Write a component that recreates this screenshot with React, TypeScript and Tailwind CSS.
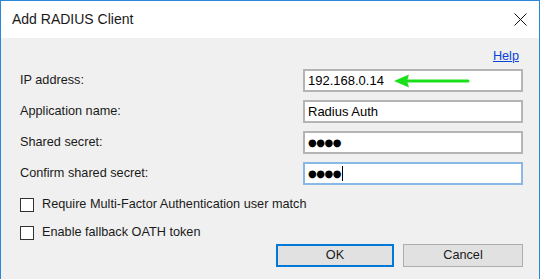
import React from 'react';

const font = { fontFamily: '"Liberation Sans", Arial, sans-serif' };

function Field({ value, focused, children }: { value?: string; focused?: boolean; children?: React.ReactNode }) {
  return (
    <div
      className={`relative h-[23px] w-[220px] bg-white border-2 flex items-center pl-[3px] text-[13px] text-black ${
        focused ? 'border-[#8ab8e6]' : 'border-[#b4b4b4]'
      }`}
    >
      {value}
      {children}
    </div>
  );
}

function Dots({ cursor }: { cursor?: boolean }) {
  return (
    <div className="flex items-center">
      <span className="text-[10px] tracking-[-0.5px]" style={{ fontFamily: '"DejaVu Sans", sans-serif' }}>
        ●●●●
      </span>
      {cursor && <span className="ml-[1px] w-[1px] h-[15px] bg-black" />}
    </div>
  );
}

function Check({ label }: { label: string }) {
  return (
    <div className="flex items-center h-[14px]">
      <div className="w-[14px] h-[14px] border border-[#333] bg-white" />
      <span className="ml-[8px] text-[12.7px] text-[#1a1a1a]">{label}</span>
    </div>
  );
}

export default function App() {
  const rows: { label: string; field: React.ReactNode }[] = [
    {
      label: 'IP address:',
      field: (
        <Field value="192.168.0.14">
          {/* annotation arrow */}
          <svg className="absolute left-[89px] top-[3px]" width="76" height="14" viewBox="0 0 76 14">
            <line x1="10" y1="7" x2="74" y2="7" stroke="#19e019" strokeWidth="3" strokeLinecap="round" />
            <polygon points="0,7 15,0.5 13,7 15,13.5" fill="#19e019" />
          </svg>
        </Field>
      ),
    },
    { label: 'Application name:', field: <Field value="Radius Auth" /> },
    { label: 'Shared secret:', field: <Field><Dots /></Field> },
    { label: 'Confirm shared secret:', field: <Field focused><Dots cursor /></Field> },
  ];

  return (
    <div className="w-[540px] h-[279px] flex flex-col border-x border-t border-[#2b88d8] overflow-hidden" style={font}>
      {/* Title bar */}
      <div className="h-[37px] shrink-0 bg-white flex items-center justify-between pl-[11px] pr-[12px]">
        <span className="text-[14px] text-[#1a1a1a] -mt-[1px]">Add RADIUS Client</span>
        <svg width="13" height="13" viewBox="0 0 13 13" className="-mt-[1px]">
          <path d="M0.5 0.5 L12.5 12.5 M12.5 0.5 L0.5 12.5" stroke="#111" strokeWidth="1" />
        </svg>
      </div>

      {/* Body */}
      <div className="flex-1 bg-[#f0f0f0] pl-[19px] pr-[16px] pt-[11px]">
        <div className="flex justify-end pr-[4px] h-[14px]">
          <a className="text-[12.7px] text-[#0645d8] underline leading-[14px]">Help</a>
        </div>

        <div className="mt-[6px] flex flex-col gap-[8px]">
          {rows.map((r) => (
            <div key={r.label} className="flex items-center justify-between">
              <span className="text-[12.7px] text-[#1a1a1a] pt-[1px]">{r.label}</span>
              {r.field}
            </div>
          ))}
        </div>

        <div className="mt-[13px] flex flex-col gap-[14px]">
          <Check label="Require Multi-Factor Authentication user match" />
          <Check label="Enable fallback OATH token" />
        </div>

        <div className="mt-[4px] flex justify-end gap-[9px]">
          <button className="w-[118px] h-[23px] bg-[#e1e1e1] border-2 border-[#0078d7] text-[12.7px] text-[#1a1a1a]">
            OK
          </button>
          <button className="w-[120px] h-[23px] bg-[#e1e1e1] border border-[#adadad] text-[12.7px] text-[#1a1a1a]">
            Cancel
          </button>
        </div>
      </div>
    </div>
  );
}
